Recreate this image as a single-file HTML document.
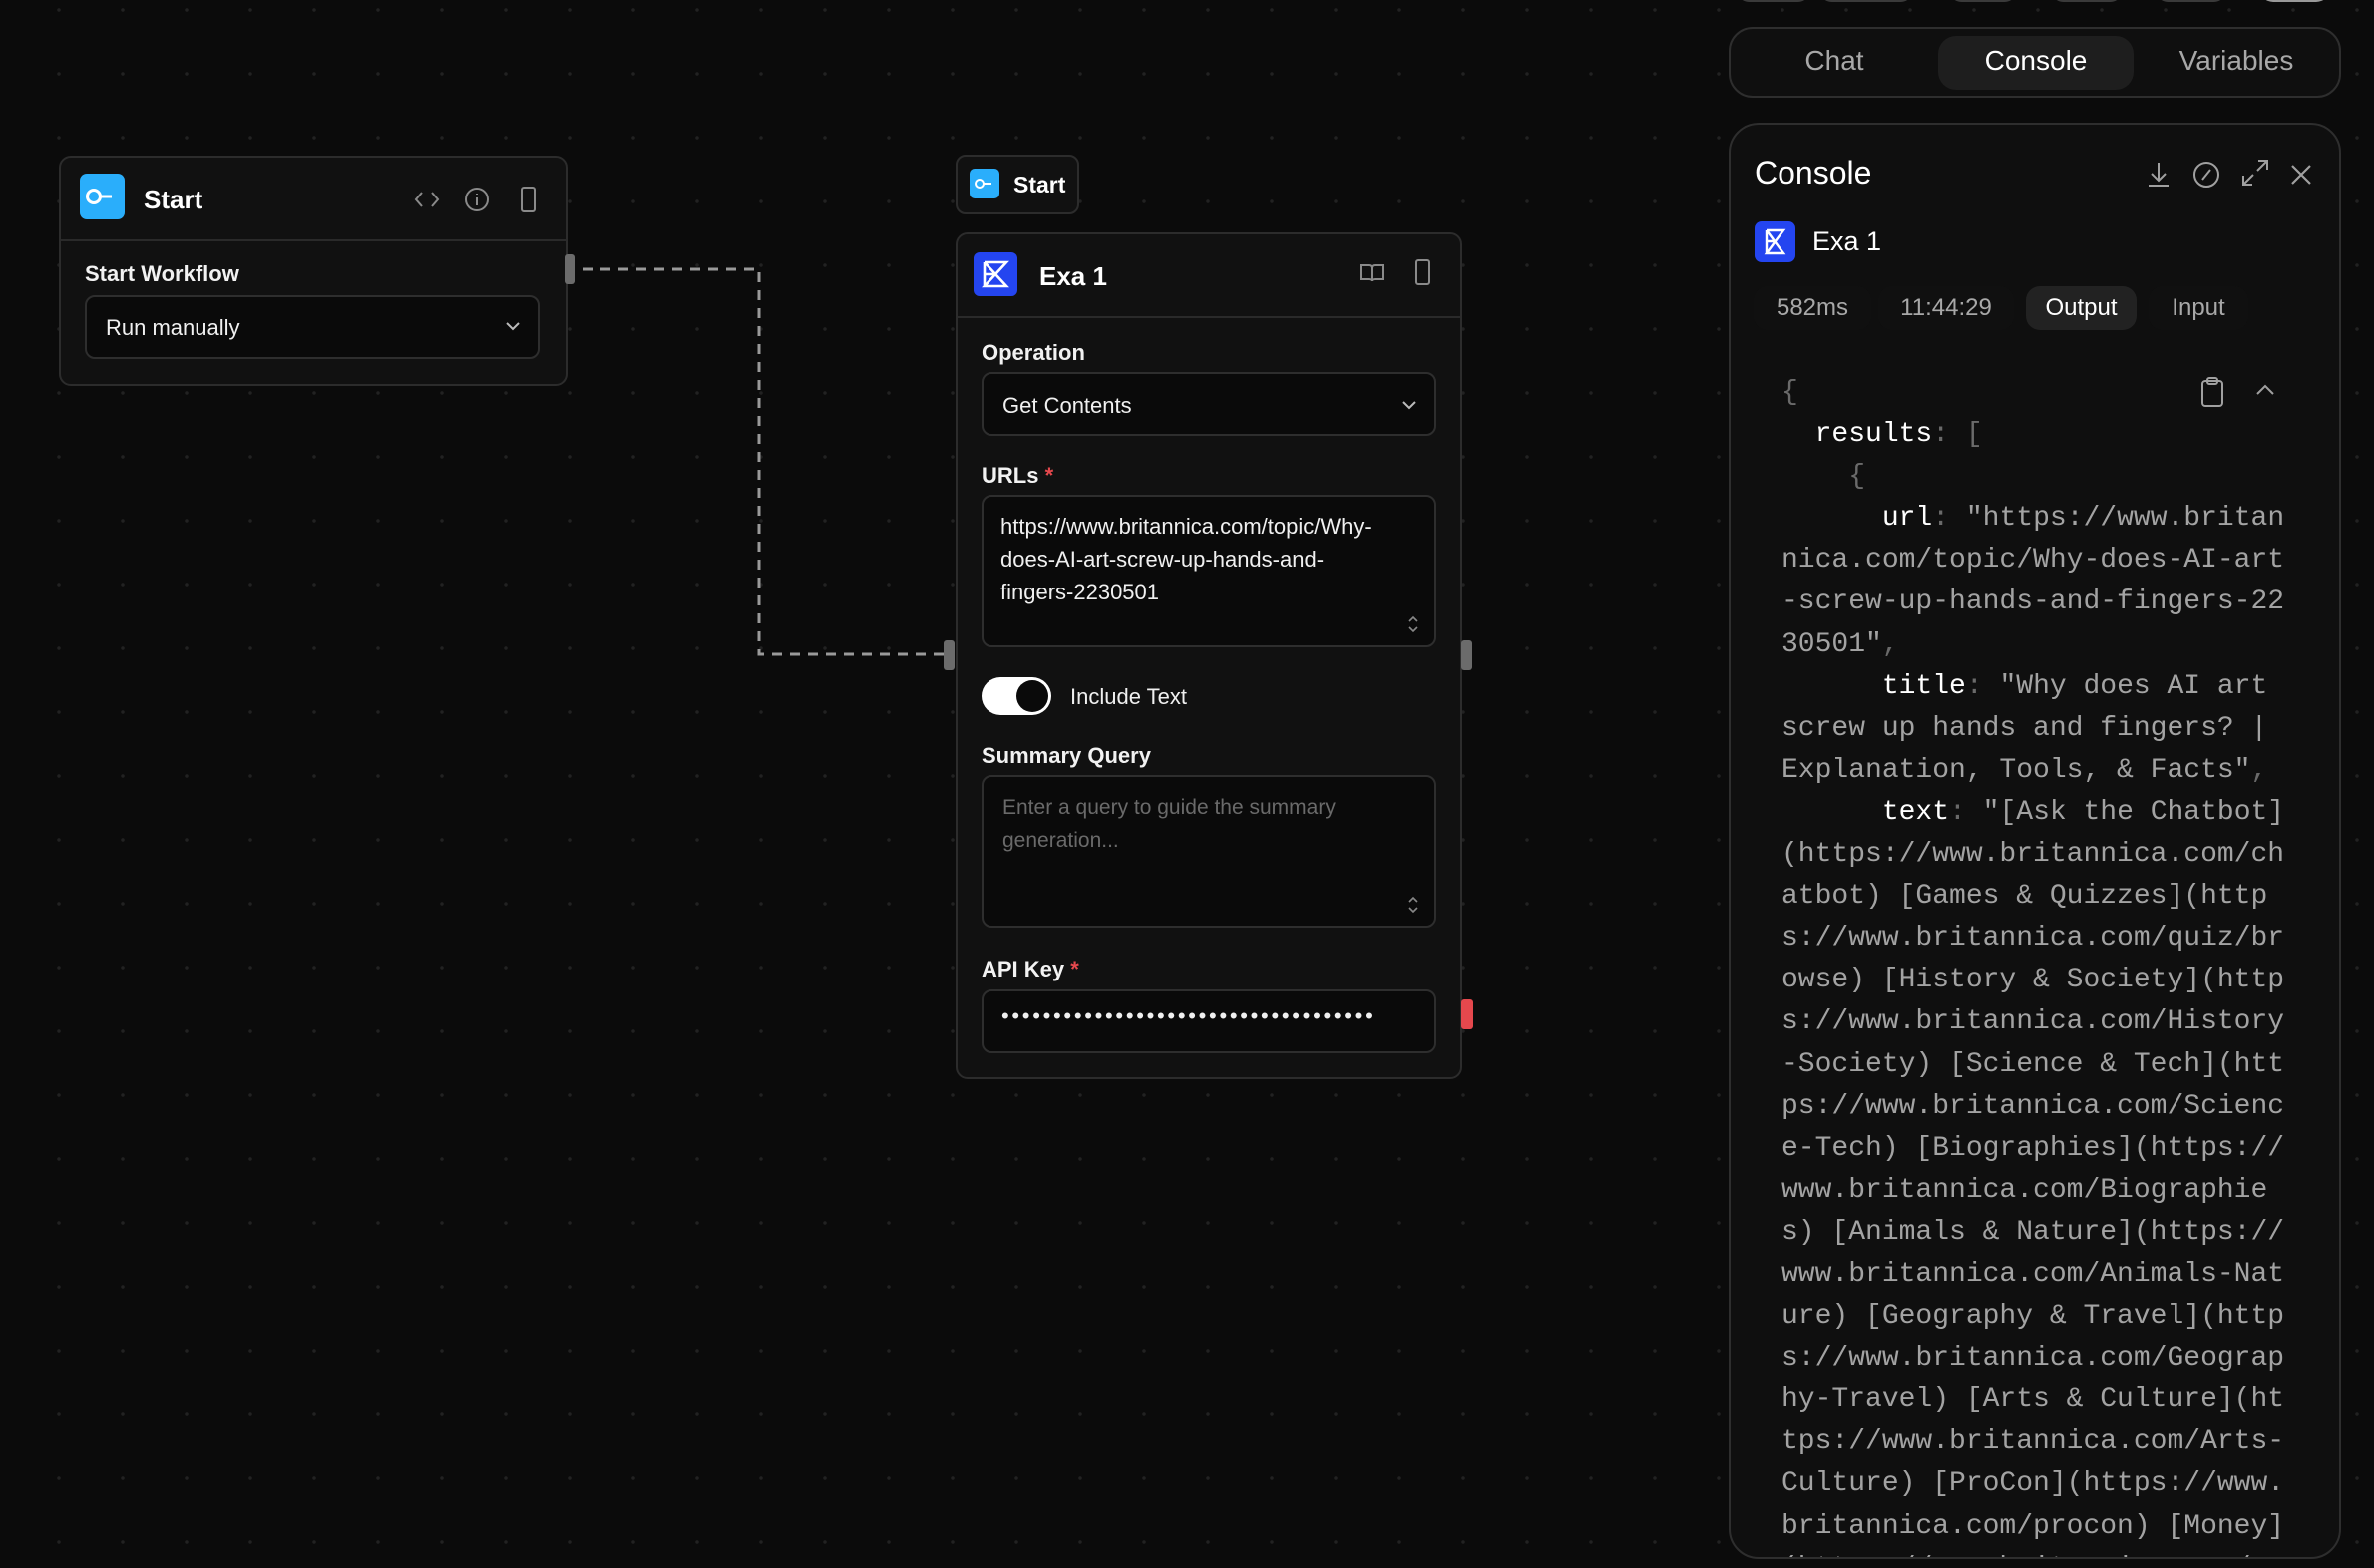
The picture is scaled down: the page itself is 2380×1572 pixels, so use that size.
<!DOCTYPE html>
<html><head><meta charset="utf-8">
<style>
*{box-sizing:border-box;margin:0;padding:0}
body{width:2380px;height:1572px;overflow:hidden;background:#0b0b0b;font-family:"Liberation Sans",sans-serif;color:#fff;position:relative;
background-image:radial-gradient(circle,#222 1.5px,transparent 2px);background-size:64px 64px;background-position:27px 106px}
.abs{position:absolute}
.node{position:absolute;background:#111;border:2px solid #2c2c2c;border-radius:12px}
.lbl{position:absolute;font-size:22px;font-weight:bold;color:#f2f2f2}
.field{position:absolute;border:2px solid #2e2e2e;border-radius:10px;background:#0a0a0a;font-size:22px;color:#f0f0f0}
.star{color:#e5484d}
svg{display:block}
.handle{position:absolute;background:#6b6b6b;border-radius:3px}
pre{font-family:"Liberation Mono",monospace;font-size:28px;line-height:42.1px;color:#a3a3a3}
pre b{color:#fff;font-weight:normal}
pre i{color:#6a6a6a;font-style:normal}
.pill{position:absolute;top:285px;height:44px;border-radius:14px;font-size:24px;line-height:44px;text-align:center;color:#a8a8a8;background:#101010}
</style></head><body>

<svg class="abs" style="left:0;top:0" width="1000" height="700"><path d="M584 270H761V656H950" fill="none" stroke="#9a9a9a" stroke-width="3" stroke-dasharray="10 8"/></svg>

<div class="node" style="left:59px;top:156px;width:510px;height:231px">
  <div class="abs" style="left:0;top:82px;width:506px;height:2px;background:#2a2a2a"></div>
  <div class="abs" style="left:19px;top:16px;width:45px;height:46px;background:#2aaefb;border-radius:7px">
    <svg width="45" height="46" viewBox="0 0 45 46"><circle cx="14" cy="23" r="6.5" fill="none" stroke="#fff" stroke-width="3"/><path d="M20.5 23H32" stroke="#fff" stroke-width="3"/></svg>
  </div>
  <div class="abs" style="left:83px;top:27px;font-size:26px;font-weight:bold">Start</div>
  <svg class="abs" style="left:352px;top:30px" width="30" height="24" viewBox="0 0 30 24" fill="none" stroke="#8a8a8a" stroke-width="2"><path d="M10 5 4 12l6 7M20 5l6 7-6 7"/></svg>
  <svg class="abs" style="left:403px;top:28px" width="28" height="28" viewBox="0 0 28 28" fill="none" stroke="#8a8a8a" stroke-width="2"><circle cx="14" cy="14" r="11"/><path d="M14 12v8M14 8v1"/></svg>
  <div class="abs" style="left:461px;top:29px;width:15px;height:26px;border:2px solid #8a8a8a;border-radius:3px"></div>
  <div class="lbl" style="left:24px;top:104px">Start Workflow</div>
  <div class="field" style="left:24px;top:138px;width:456px;height:64px">
    <div class="abs" style="left:19px;top:18px">Run manually</div>
    <svg class="abs" style="left:418px;top:22px" width="18" height="14" viewBox="0 0 18 14" fill="none" stroke="#bbb" stroke-width="2"><path d="M3 4l6 6 6-6"/></svg>
  </div>
</div>
<div class="handle" style="left:566px;top:255px;width:10px;height:30px"></div>

<div class="node" style="left:958px;top:155px;width:124px;height:60px;border-radius:10px">
  <div class="abs" style="left:12px;top:12px;width:30px;height:30px;background:#2aaefb;border-radius:5px">
    <svg width="30" height="30" viewBox="0 0 30 30"><circle cx="10" cy="15" r="4" fill="none" stroke="#fff" stroke-width="2"/><path d="M14 15h8" stroke="#fff" stroke-width="2"/></svg>
  </div>
  <div class="abs" style="left:56px;top:15px;font-size:23px;font-weight:bold">Start</div>
</div>

<div class="node" style="left:958px;top:233px;width:508px;height:849px">
  <div class="abs" style="left:0;top:82px;width:504px;height:2px;background:#2a2a2a"></div>
  <div class="abs" style="left:16px;top:18px;width:44px;height:44px;background:#2445f0;border-radius:6px">
    <svg width="44" height="44" viewBox="0 0 44 44" fill="none" stroke="#fff" stroke-width="2.6"><path d="M11 10h22L11 34h22L11 10M11 10v24M11 22h11"/></svg>
  </div>
  <div class="abs" style="left:82px;top:27px;font-size:26px;font-weight:bold">Exa 1</div>
  <svg class="abs" style="left:402px;top:26px" width="26" height="26" viewBox="0 0 26 26" fill="none" stroke="#8a8a8a" stroke-width="2"><path d="M2 5h8c2 0 3 1 3 3v13c0-1-1-2-3-2H2zM24 5h-8c-2 0-3 1-3 3v13c0-1 1-2 3-2h8z"/></svg>
  <div class="abs" style="left:459px;top:25px;width:15px;height:26px;border:2px solid #8a8a8a;border-radius:3px"></div>

  <div class="lbl" style="left:24px;top:106px">Operation</div>
  <div class="field" style="left:24px;top:138px;width:456px;height:64px">
    <div class="abs" style="left:19px;top:19px">Get Contents</div>
    <svg class="abs" style="left:418px;top:24px" width="18" height="14" viewBox="0 0 18 14" fill="none" stroke="#bbb" stroke-width="2"><path d="M3 4l6 6 6-6"/></svg>
  </div>

  <div class="lbl" style="left:24px;top:229px">URLs <span class="star">*</span></div>
  <div class="field" style="left:24px;top:261px;width:456px;height:153px">
    <div class="abs" style="left:17px;top:13px;width:375px;line-height:33px;font-size:22px">https://www.britannica.com/topic/Why-does-AI-art-screw-up-hands-and-fingers-2230501</div>
    <svg class="abs" style="left:424px;top:118px" width="14" height="20" viewBox="0 0 14 20" fill="none" stroke="#888" stroke-width="1.6"><path d="M3 7l4-4 4 4M3 13l4 4 4-4"/></svg>
  </div>

  <div class="abs" style="left:24px;top:444px;width:70px;height:38px;background:#fff;border-radius:19px">
    <div class="abs" style="left:35px;top:3px;width:32px;height:32px;background:#0a0a0a;border-radius:50%"></div>
  </div>
  <div class="abs" style="left:113px;top:451px;font-size:22px;color:#f0f0f0">Include Text</div>

  <div class="lbl" style="left:24px;top:510px">Summary Query</div>
  <div class="field" style="left:24px;top:542px;width:456px;height:153px;color:#6a6a6a">
    <div class="abs" style="left:19px;top:14px;width:420px;line-height:33px;font-size:21px">Enter a query to guide the summary generation...</div>
    <svg class="abs" style="left:424px;top:118px" width="14" height="20" viewBox="0 0 14 20" fill="none" stroke="#888" stroke-width="1.6"><path d="M3 7l4-4 4 4M3 13l4 4 4-4"/></svg>
  </div>

  <div class="lbl" style="left:24px;top:724px">API Key <span class="star">*</span></div>
  <div class="field" style="left:24px;top:757px;width:456px;height:64px">
    <div class="abs" style="left:18px;top:12px;font-size:22px;letter-spacing:2.7px">••••••••••••••••••••••••••••••••••••</div>
  </div>
</div>
<div class="handle" style="left:946px;top:642px;width:11px;height:30px"></div>
<div class="handle" style="left:1465px;top:642px;width:11px;height:30px"></div>
<div class="handle" style="left:1465px;top:1002px;width:12px;height:30px;background:#e5484d"></div>

<div class="abs" style="left:1740px;top:-40px;width:76px;height:42px;border:2px solid #3a3a3a;border-radius:14px"></div>
<div class="abs" style="left:1823px;top:-40px;width:96px;height:42px;border:2px solid #3a3a3a;border-radius:14px"></div>
<div class="abs" style="left:1953px;top:-40px;width:70px;height:42px;border:2px solid #3a3a3a;border-radius:14px"></div>
<div class="abs" style="left:2055px;top:-40px;width:74px;height:42px;border:2px solid #3a3a3a;border-radius:14px"></div>
<div class="abs" style="left:2160px;top:-40px;width:73px;height:42px;border:2px solid #3a3a3a;border-radius:14px"></div>
<div class="abs" style="left:2265px;top:-40px;width:71px;height:42px;background:#999;border-radius:14px"></div>

<div class="abs" style="left:1733px;top:27px;width:614px;height:71px;border:2px solid #2e2e2e;border-radius:24px;background:#0f0f0f">
  <div class="abs" style="left:208px;top:7px;width:196px;height:54px;background:#1e1e1e;border-radius:18px"></div>
  <div class="abs" style="left:0;top:16px;width:208px;text-align:center;font-size:28px;color:#a8a8a8">Chat</div>
  <div class="abs" style="left:208px;top:16px;width:196px;text-align:center;font-size:28px;color:#fff">Console</div>
  <div class="abs" style="left:404px;top:16px;width:206px;text-align:center;font-size:28px;color:#a8a8a8">Variables</div>
</div>

<div class="abs" style="left:1733px;top:123px;width:614px;height:1440px;border:2px solid #2e2e2e;border-radius:30px;background:#0f0f0f;overflow:hidden">
  <div class="abs" style="left:24px;top:30px;font-size:32px">Console</div>
  <svg class="abs" style="left:414px;top:34px" width="30" height="32" viewBox="0 0 30 32" fill="none" stroke="#a0a0a0" stroke-width="2"><path d="M15 4v18M8 15l7 7 7-7M5 27h20"/></svg>
  <svg class="abs" style="left:461px;top:34px" width="32" height="32" viewBox="0 0 32 32" fill="none" stroke="#a0a0a0" stroke-width="2"><circle cx="16" cy="16" r="12"/><path d="M20 11l-8 10"/></svg>
  <svg class="abs" style="left:510px;top:32px" width="32" height="32" viewBox="0 0 32 32" fill="none" stroke="#a0a0a0" stroke-width="2"><path d="M19 4h9v9M28 4l-10 10M13 28H4v-9M4 28l10-10"/></svg>
  <svg class="abs" style="left:558px;top:36px" width="28" height="28" viewBox="0 0 28 28" fill="none" stroke="#a0a0a0" stroke-width="2.2"><path d="M5 5l18 18M23 5L5 23"/></svg>

  <div class="abs" style="left:24px;top:97px;width:41px;height:41px;background:#2445f0;border-radius:7px">
    <svg width="41" height="41" viewBox="0 0 41 41" fill="none" stroke="#fff" stroke-width="2.4"><path d="M12 9h17L12 32h17L12 9M12 9v23M12 20h9"/></svg>
  </div>
  <div class="abs" style="left:82px;top:102px;font-size:27px">Exa 1</div>

  <div class="pill" style="left:23px;width:118px;top:162px">582ms</div>
  <div class="pill" style="left:148px;width:136px;top:162px">11:44:29</div>
  <div class="pill" style="left:296px;width:111px;top:162px;background:#222;color:#fff">Output</div>
  <div class="pill" style="left:419px;width:100px;top:162px">Input</div>

  <svg class="abs" style="left:468px;top:251px" width="30" height="34" viewBox="0 0 30 34" fill="none" stroke="#a0a0a0" stroke-width="2"><rect x="5" y="6" width="20" height="25" rx="3"/><rect x="10" y="3" width="10" height="6" rx="2"/></svg>
  <svg class="abs" style="left:523px;top:256px" width="26" height="20" viewBox="0 0 26 20" fill="none" stroke="#a0a0a0" stroke-width="2"><path d="M5 14l8-8 8 8"/></svg>

<pre class="abs" style="left:51px;top:248px"><i>{</i>
  <b>results</b><i>:</i> <i>[</i>
    <i>{</i>
      <b>url</b><i>:</i> "https://www.britan
nica.com/topic/Why-does-AI-art
-screw-up-hands-and-fingers-22
30501"<i>,</i>
      <b>title</b><i>:</i> "Why does AI art
screw up hands and fingers? |
Explanation, Tools, &amp; Facts"<i>,</i>
      <b>text</b><i>:</i> "[Ask the Chatbot]
(https://www.britannica.com/ch
atbot) [Games &amp; Quizzes](http
s://www.britannica.com/quiz/br
owse) [History &amp; Society](http
s://www.britannica.com/History
-Society) [Science &amp; Tech](htt
ps://www.britannica.com/Scienc
e-Tech) [Biographies](https://
www.britannica.com/Biographie
s) [Animals &amp; Nature](https://
www.britannica.com/Animals-Nat
ure) [Geography &amp; Travel](http
s://www.britannica.com/Geograp
hy-Travel) [Arts &amp; Culture](ht
tps://www.britannica.com/Arts-
Culture) [ProCon](https://www.
britannica.com/procon) [Money]
(https://www.britannica.com/mo</pre>
</div>

</body></html>
